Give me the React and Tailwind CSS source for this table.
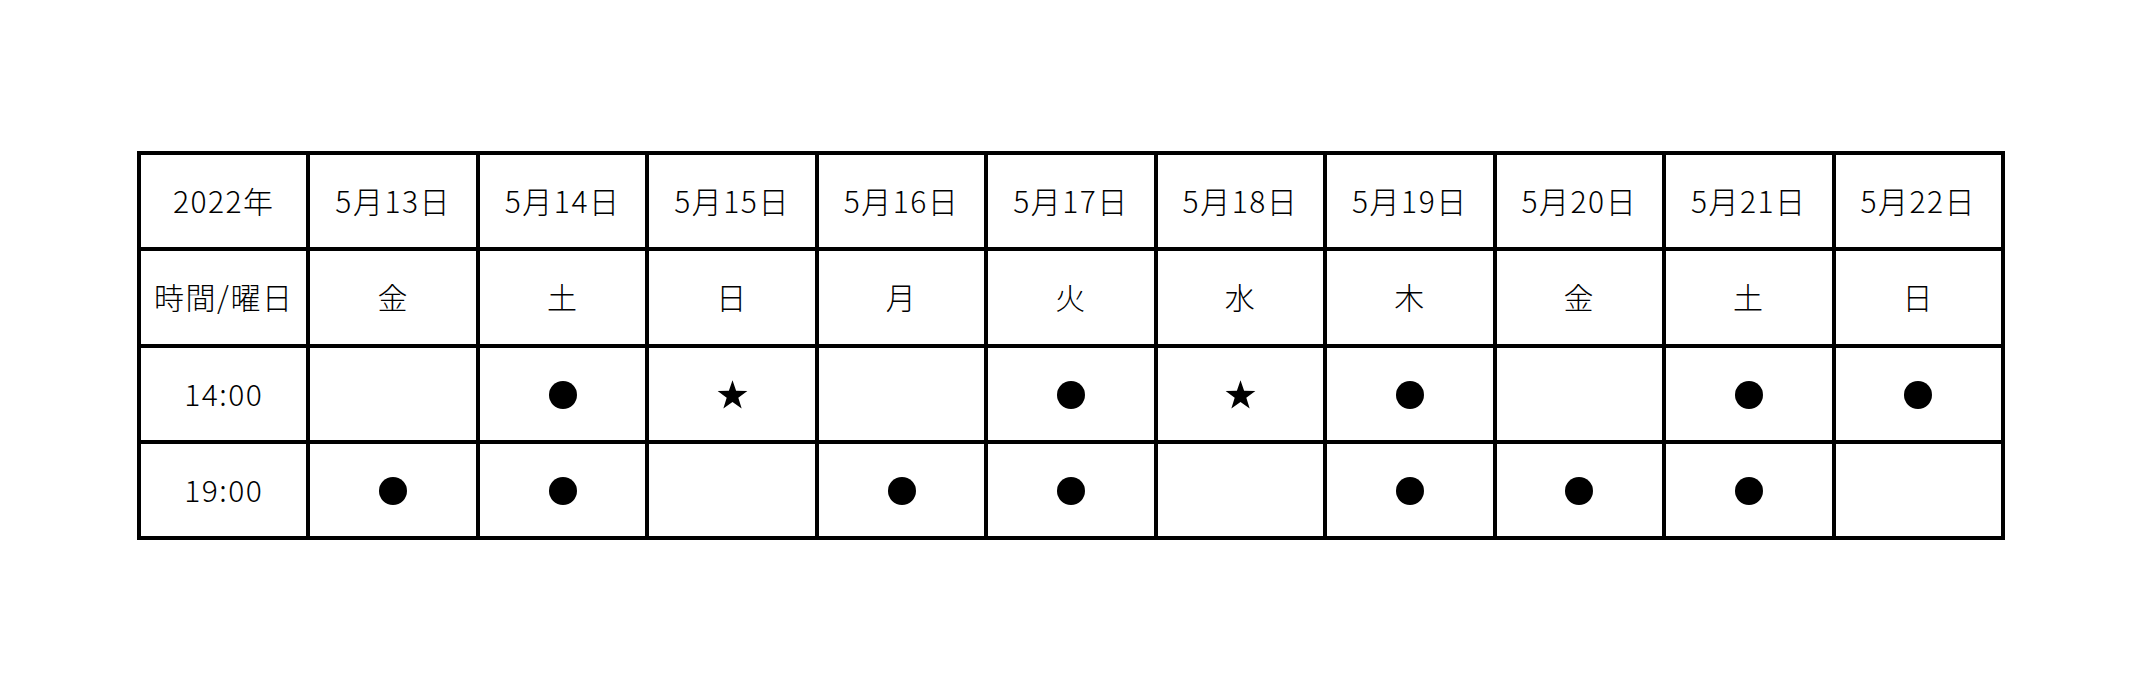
const dates = ['5月13日', '5月14日', '5月15日', '5月16日', '5月17日', '5月18日', '5月19日', '5月20日', '5月21日', '5月22日'];
const days = ['金', '土', '日', '月', '火', '水', '木', '金', '土', '日'];

// d = dot, s = star, '' = empty
const slots = [
  { time: '14:00', marks: ['', 'd', 's', '', 'd', 's', 'd', '', 'd', 'd'] },
  { time: '19:00', marks: ['d', 'd', '', 'd', 'd', '', 'd', 'd', 'd', ''] },
];

const Dot = () => <span className="inline-block w-[28px] h-[28px] rounded-full bg-black align-middle" />;

const Star = () => (
  <svg width="31" height="30" viewBox="0 0 24 23" className="inline-block align-middle">
    <path d="M12 0 L14.8 8.3 L23.5 8.4 L16.5 13.6 L19.1 22 L12 16.9 L4.9 22 L7.5 13.6 L0.5 8.4 L9.2 8.3 Z" fill="black" />
  </svg>
);

const cell = 'border-4 border-black text-center align-middle p-0 pb-[3px]';

const App = () => {
  return (
    <div
      className="w-[2156px] h-[688px] bg-white pt-[151px] pl-[137px] text-black"
      style={{ fontFamily: '"Noto Sans CJK JP", "Noto Sans", sans-serif' }}
    >
      <table className="table-fixed border-collapse w-[1868px] text-[30px] font-light leading-none tracking-[0.05em]">
        <tbody>
          <tr className="h-[96px]">
            <td className={cell}>2022年</td>
            {dates.map((d) => (
              <td key={d} className={cell}>{d}</td>
            ))}
          </tr>
          <tr className="h-[97px]">
            <td className={cell}>時間/曜日</td>
            {days.map((d, i) => (
              <td key={i} className={cell}>{d}</td>
            ))}
          </tr>
          {slots.map((s) => (
            <tr key={s.time} className="h-[96px]">
              <td className={cell}>{s.time}</td>
              {s.marks.map((m, i) => (
                <td key={i} className={cell}>
                  {m === 'd' && <Dot />}
                  {m === 's' && <Star />}
                </td>
              ))}
            </tr>
          ))}
        </tbody>
      </table>
    </div>
  );
};

export default App;
